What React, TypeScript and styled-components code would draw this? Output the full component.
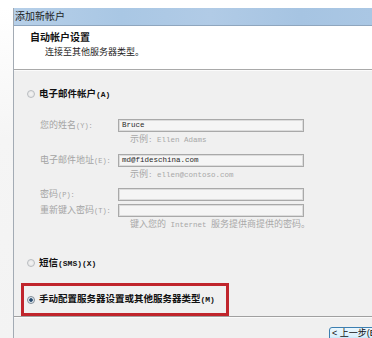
import React from "react";
import styled, { createGlobalStyle } from "styled-components";

const CJK = `"Liberation Sans", "Noto Sans CJK SC", sans-serif`;
const MONO = `"Liberation Mono", "Noto Sans CJK SC", monospace`;

const Global = createGlobalStyle`
  html, body { margin: 0; padding: 0; background: #fff; }
  body { font-family: ${CJK}; }
`;

const Screen = styled.div`
  width: 372px;
  height: 338px;
  overflow: hidden;
  display: flex;
  flex-direction: column;
  background: #fff;
`;

const TopMargin = styled.div`
  height: 8px;
  flex: none;
`;

const WindowRow = styled.div`
  flex: 1;
  display: flex;
  min-height: 0;
`;

const Gutter = styled.div`
  width: 13px;
  flex: none;
  background: linear-gradient(#ffffff, #f5f5f5 40%, #f3f3f3);
`;

const Frame = styled.div`
  flex: 1;
  min-width: 0;
  display: flex;
  flex-direction: column;
  border-left: 1px solid #a3abb4;
  background: #f0f0f0;
`;

const TitleBar = styled.div`
  box-sizing: border-box;
  height: 18px;
  flex: none;
  padding: 2px 0 0 1px;
  border-bottom: 1px solid #8fa6be;
  background: linear-gradient(
    90deg,
    #b6cfe8 0%,
    #a9c7e4 30%,
    #b1cbe6 55%,
    #a6c4e2 80%,
    #aac7e4 100%
  );
  font: 10px/13px ${CJK};
  color: #1c1c1c;
`;

const Header = styled.div`
  box-sizing: border-box;
  height: 44px;
  flex: none;
  padding: 5px 0 0 16px;
  background: #fff;
  border-bottom: 1px solid #a9a9a9;
`;

const HeaderTitle = styled.div`
  font: bold 10px/14px ${CJK};
  color: #111;
`;

const HeaderSub = styled.div`
  font: 9px/14px ${CJK};
  color: #222;
  padding-left: 15px;
`;

const Body = styled.div`
  flex: 1;
  display: flex;
  flex-direction: column;
  border-top: 1px solid #fbfbfb;
`;

const RadioRow = styled.div<{ $mt: number }>`
  display: flex;
  align-items: center;
  gap: 4px;
  height: 14px;
  margin-top: ${(p) => p.$mt}px;
  padding-left: 13px;
  font: bold 9.5px/14px ${CJK};
  color: #111;
  white-space: nowrap;
`;

const Key = styled.span`
  font-family: ${MONO};
  font-size: 8px;
  font-weight: bold;
`;

const RadioDot = styled.span<{ $checked?: boolean }>`
  box-sizing: border-box;
  width: 8px;
  height: 8px;
  flex: none;
  border-radius: 50%;
  border: 1px solid ${(p) => (p.$checked ? "#7f8b97" : "#b9bdc1")};
  background: ${(p) =>
    p.$checked
      ? "radial-gradient(circle, #1f3e5e 0, #35597c 1.5px, #dfe6ec 2.2px, #e9edf0 100%)"
      : "radial-gradient(circle, #f4f4f4 0, #e2e2e2 100%)"};
`;

const Form = styled.div`
  display: flex;
  flex-direction: column;
  padding-left: 26px;
`;

const FieldRow = styled.div<{ $mt: number }>`
  display: flex;
  align-items: center;
  height: 13px;
  margin-top: ${(p) => p.$mt}px;
`;

const FieldLabel = styled.span`
  width: 78px;
  flex: none;
  font: 9px/13px ${CJK};
  color: #a4a4a4;
  white-space: nowrap;
`;

const Small = styled.span`
  font-family: ${MONO};
  font-size: 7px;
`;

const TextBox = styled.div`
  box-sizing: border-box;
  width: 186px;
  height: 13px;
  flex: none;
  border: 1px solid #a9a9a9;
  box-shadow: inset 0 0 0 1px #dcdcdc;
  background: #f5f5f5;
  padding: 0 3px;
  font: 7.5px/11px ${MONO};
  color: #2a2a2a;
  white-space: nowrap;
  overflow: hidden;
`;

const NoteRow = styled.div<{ $mt: number }>`
  height: 13px;
  margin-top: ${(p) => p.$mt}px;
  padding-left: 90px;
  font: 9px/13px ${CJK};
  color: #a8a8a8;
  white-space: nowrap;
`;

const NoteLatin = styled.span`
  font-family: ${MONO};
  font-size: 7.5px;
`;

const Highlight = styled.div`
  box-sizing: border-box;
  width: 208px;
  height: 33px;
  margin: 13px 0 0 7px;
  padding-left: 3px;
  border: 3px solid #c0252c;
  display: flex;
  align-items: center;
  gap: 4px;
  font: bold 9.5px/14px ${CJK};
  color: #111;
  white-space: nowrap;
`;

const Separator = styled.div`
  height: 1px;
  flex: none;
  background: #a0a0a0;
  border-bottom: 1px solid #fafafa;
`;

const Footer = styled.div`
  display: flex;
  padding: 9px 0 0 315px;
`;

const Button = styled.button`
  box-sizing: border-box;
  width: 75px;
  height: 22px;
  flex: none;
  margin: 0;
  padding: 0 0 0 2px;
  text-align: left;
  align-self: flex-start;
  border: 1px solid #3c7fb1;
  border-radius: 3px;
  background: linear-gradient(#eaf6fd 0%, #d9f0fc 45%, #bee6fd 50%, #a7d9f5 100%);
  font: 9px/10px ${CJK};
  color: #111;
  white-space: nowrap;
  display: flex;
  align-items: flex-start;
`;

export default function App() {
  return (
    <Screen>
      <Global />
      <TopMargin />
      <WindowRow>
        <Gutter />
        <Frame>
          <TitleBar>添加新帐户</TitleBar>
          <Header>
            <HeaderTitle>自动帐户设置</HeaderTitle>
            <HeaderSub>连接至其他服务器类型。</HeaderSub>
          </Header>
          <Body>
            <RadioRow $mt={16}>
              <RadioDot />
              <span>
                电子邮件帐户<Key>(A)</Key>
              </span>
            </RadioRow>
            <Form>
              <FieldRow $mt={18}>
                <FieldLabel>
                  您的姓名<Small>(Y):</Small>
                </FieldLabel>
                <TextBox>Bruce</TextBox>
              </FieldRow>
              <NoteRow $mt={1}>
                示例<NoteLatin>: Ellen Adams</NoteLatin>
              </NoteRow>
              <FieldRow $mt={8}>
                <FieldLabel>
                  电子邮件地址<Small>(E):</Small>
                </FieldLabel>
                <TextBox>md@fideschina.com</TextBox>
              </FieldRow>
              <NoteRow $mt={1}>
                示例<NoteLatin>: ellen@contoso.com</NoteLatin>
              </NoteRow>
              <FieldRow $mt={7}>
                <FieldLabel>
                  密码<Small>(P):</Small>
                </FieldLabel>
                <TextBox />
              </FieldRow>
              <FieldRow $mt={3}>
                <FieldLabel>
                  重新键入密码<Small>(T):</Small>
                </FieldLabel>
                <TextBox />
              </FieldRow>
              <NoteRow $mt={1}>
                键入您的<NoteLatin> Internet </NoteLatin>服务提供商提供的密码。
              </NoteRow>
            </Form>
            <RadioRow $mt={25}>
              <RadioDot />
              <span>
                短信<Key>(SMS)(X)</Key>
              </span>
            </RadioRow>
            <Highlight>
              <RadioDot $checked />
              <span>
                手动配置服务器设置或其他服务器类型<Key>(M)</Key>
              </span>
            </Highlight>
            <Separator />
            <Footer>
              <Button>&lt; 上一步(B)</Button>
            </Footer>
          </Body>
        </Frame>
      </WindowRow>
    </Screen>
  );
}
